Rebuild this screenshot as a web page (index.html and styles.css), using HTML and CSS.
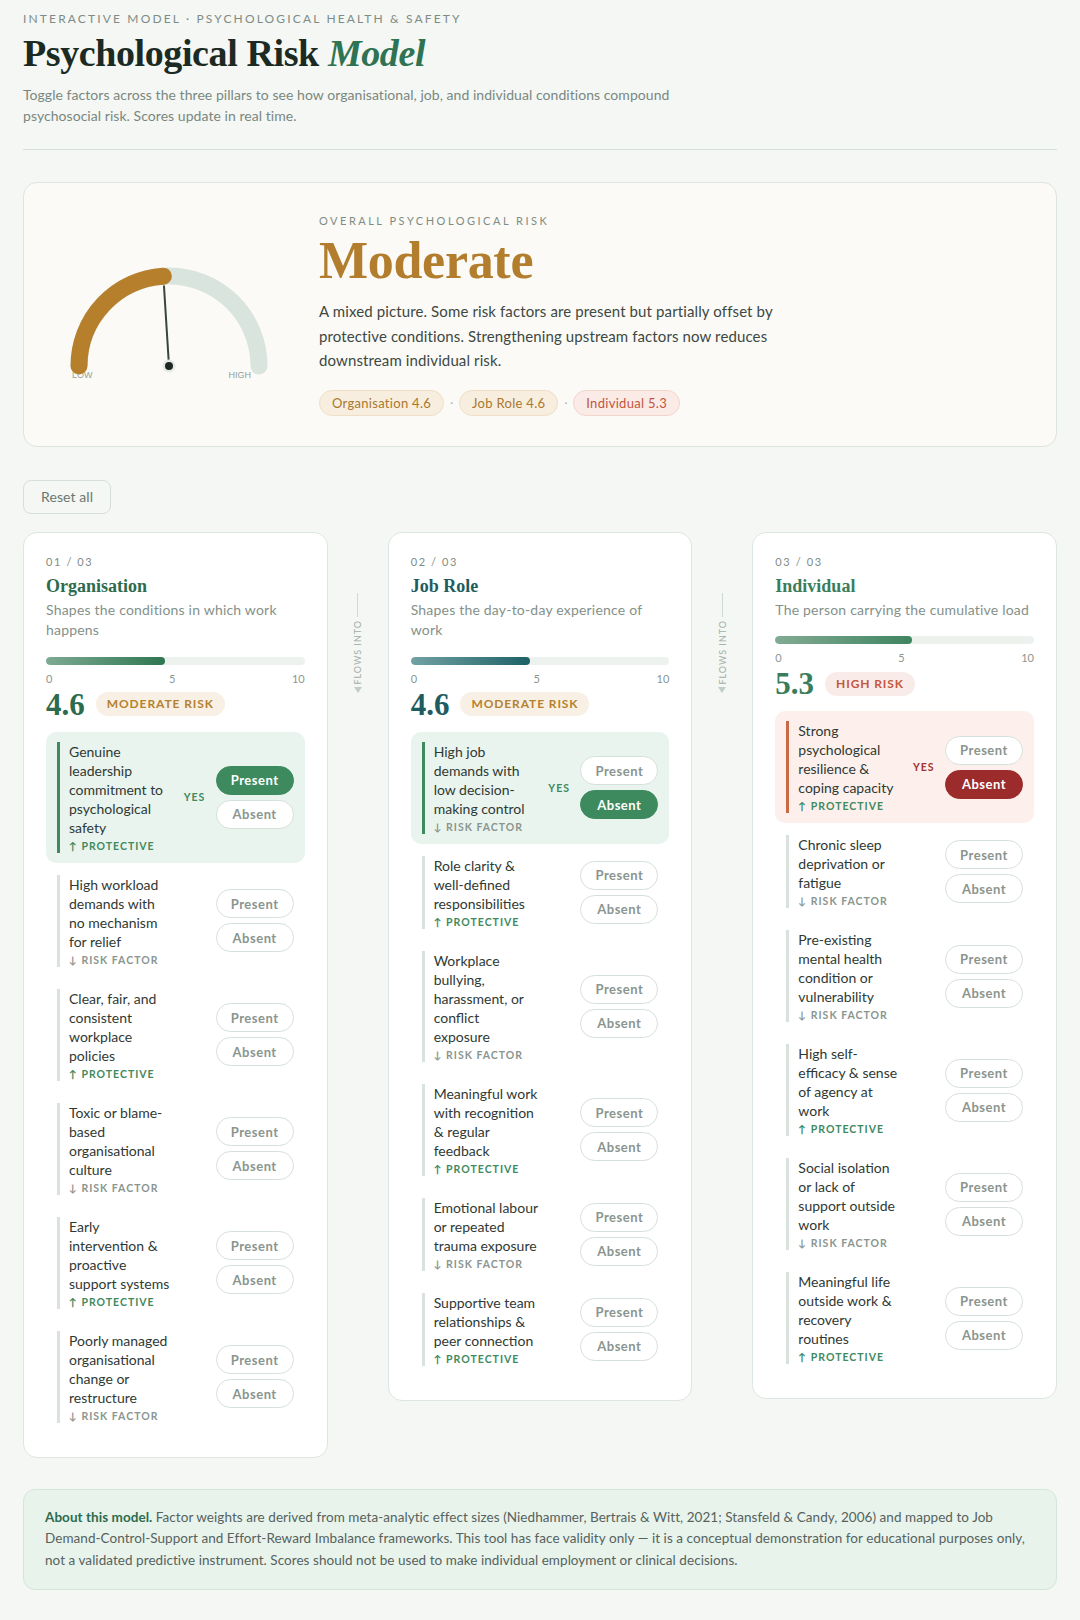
FILE: index.html
```html
<!DOCTYPE html>
<html lang="en">
<head>
<meta charset="utf-8">
<title>Psychological Risk Model</title>
<link rel="stylesheet" href="styles.css">
</head>
<body>
<main class="page">
  <header class="head">
    <div class="eyebrow">Interactive Model · Psychological Health &amp; Safety</div>
    <h1 class="title">Psychological Risk <em>Model</em></h1>
    <p class="lede">Toggle factors across the three pillars to see how organisational, job, and individual conditions compound psychosocial risk. Scores update in real time.</p>
  </header>
  <hr class="rule">

  <section class="hero">
    <svg class="gauge" width="226" height="134" viewBox="0 0 226 134" aria-hidden="true">
      <text class="g-lbl" x="16" y="131">LOW</text>
      <text class="g-lbl" x="195" y="131" text-anchor="end">HIGH</text>
      <path d="M23 119 A90 90 0 0 1 203 119" fill="none" stroke="#d8e4dd" stroke-width="17" stroke-linecap="round"/>
      <path d="M23 119 A90 90 0 0 1 107.35 29.18" fill="none" stroke="#b57f2c" stroke-width="17" stroke-linecap="round"/>
      <line x1="113" y1="119" x2="107.98" y2="39.16" stroke="#3b4540" stroke-width="2" stroke-linecap="round"/>
      <circle cx="113" cy="119" r="6.5" fill="#e4eae6"/>
      <circle cx="113" cy="119" r="4" fill="#1f2823"/>
    </svg>
    <div class="hero-body">
      <div class="hero-eyebrow">Overall Psychological Risk</div>
      <div class="verdict">Moderate</div>
      <p class="hero-text">A mixed picture. Some risk factors are present but partially offset by protective conditions. Strengthening upstream factors now reduces downstream individual risk.</p>
      <div class="pills">
        <span class="pill pill-gold">Organisation 4.6</span>
        <span class="sep">·</span>
        <span class="pill pill-gold">Job Role 4.6</span>
        <span class="sep">·</span>
        <span class="pill pill-red">Individual 5.3</span>
      </div>
    </div>
  </section>

  <button class="reset" type="button">Reset all</button>

  <section class="pillars">
    <article class="pillar">
      <div class="pillar-num">01 / 03</div>
      <h2 class="pillar-title c-org">Organisation</h2>
      <p class="pillar-desc">Shapes the conditions in which work happens</p>
      <div class="bar"><div class="bar-fill fill-org" style="width:46%"></div></div>
      <div class="scale"><span>0</span><span>5</span><span>10</span></div>
      <div class="score-row"><span class="score c-org">4.6</span><span class="badge badge-mod">Moderate risk</span></div>
      <ul class="factors">
        <li class="factor hl-green"><div class="factor-inner">
          <div><div class="factor-name">Genuine leadership commitment to psychological safety</div><div class="tag tag-pro">↑ Protective</div></div>
          <span class="state">YES</span>
          <div class="toggles"><button class="tbtn on-green" type="button">Present</button><button class="tbtn" type="button">Absent</button></div>
        </div></li>
        <li class="factor"><div class="factor-inner">
          <div><div class="factor-name">High workload demands with<br>no mechanism for relief</div><div class="tag tag-risk">↓ Risk factor</div></div>
          <span class="state"></span>
          <div class="toggles"><button class="tbtn" type="button">Present</button><button class="tbtn" type="button">Absent</button></div>
        </div></li>
        <li class="factor"><div class="factor-inner">
          <div><div class="factor-name">Clear, fair, and consistent workplace policies</div><div class="tag tag-pro">↑ Protective</div></div>
          <span class="state"></span>
          <div class="toggles"><button class="tbtn" type="button">Present</button><button class="tbtn" type="button">Absent</button></div>
        </div></li>
        <li class="factor"><div class="factor-inner">
          <div><div class="factor-name">Toxic or blame-based organisational culture</div><div class="tag tag-risk">↓ Risk factor</div></div>
          <span class="state"></span>
          <div class="toggles"><button class="tbtn" type="button">Present</button><button class="tbtn" type="button">Absent</button></div>
        </div></li>
        <li class="factor"><div class="factor-inner">
          <div><div class="factor-name">Early intervention &amp; proactive support systems</div><div class="tag tag-pro">↑ Protective</div></div>
          <span class="state"></span>
          <div class="toggles"><button class="tbtn" type="button">Present</button><button class="tbtn" type="button">Absent</button></div>
        </div></li>
        <li class="factor"><div class="factor-inner">
          <div><div class="factor-name">Poorly managed organisational change or restructure</div><div class="tag tag-risk">↓ Risk factor</div></div>
          <span class="state"></span>
          <div class="toggles"><button class="tbtn" type="button">Present</button><button class="tbtn" type="button">Absent</button></div>
        </div></li>
      </ul>
    </article>

    <div class="flow" aria-hidden="true"><span class="flow-line"></span><span class="flow-text">Flows into</span><span class="flow-arrow"></span></div>

    <article class="pillar">
      <div class="pillar-num">02 / 03</div>
      <h2 class="pillar-title c-job">Job Role</h2>
      <p class="pillar-desc">Shapes the day-to-day experience of work</p>
      <div class="bar"><div class="bar-fill fill-job" style="width:46%"></div></div>
      <div class="scale"><span>0</span><span>5</span><span>10</span></div>
      <div class="score-row"><span class="score c-job">4.6</span><span class="badge badge-mod">Moderate risk</span></div>
      <ul class="factors">
        <li class="factor hl-green"><div class="factor-inner">
          <div><div class="factor-name">High job demands with low decision-making control</div><div class="tag tag-risk">↓ Risk factor</div></div>
          <span class="state">YES</span>
          <div class="toggles"><button class="tbtn" type="button">Present</button><button class="tbtn on-green" type="button">Absent</button></div>
        </div></li>
        <li class="factor"><div class="factor-inner">
          <div><div class="factor-name">Role clarity &amp; well-defined responsibilities</div><div class="tag tag-pro">↑ Protective</div></div>
          <span class="state"></span>
          <div class="toggles"><button class="tbtn" type="button">Present</button><button class="tbtn" type="button">Absent</button></div>
        </div></li>
        <li class="factor"><div class="factor-inner">
          <div><div class="factor-name">Workplace bullying, harassment, or conflict<br>exposure</div><div class="tag tag-risk">↓ Risk factor</div></div>
          <span class="state"></span>
          <div class="toggles"><button class="tbtn" type="button">Present</button><button class="tbtn" type="button">Absent</button></div>
        </div></li>
        <li class="factor"><div class="factor-inner">
          <div><div class="factor-name">Meaningful work with recognition &amp; regular feedback</div><div class="tag tag-pro">↑ Protective</div></div>
          <span class="state"></span>
          <div class="toggles"><button class="tbtn" type="button">Present</button><button class="tbtn" type="button">Absent</button></div>
        </div></li>
        <li class="factor"><div class="factor-inner">
          <div><div class="factor-name">Emotional labour or repeated trauma exposure</div><div class="tag tag-risk">↓ Risk factor</div></div>
          <span class="state"></span>
          <div class="toggles"><button class="tbtn" type="button">Present</button><button class="tbtn" type="button">Absent</button></div>
        </div></li>
        <li class="factor"><div class="factor-inner">
          <div><div class="factor-name">Supportive team relationships &amp; peer connection</div><div class="tag tag-pro">↑ Protective</div></div>
          <span class="state"></span>
          <div class="toggles"><button class="tbtn" type="button">Present</button><button class="tbtn" type="button">Absent</button></div>
        </div></li>
      </ul>
    </article>

    <div class="flow" aria-hidden="true"><span class="flow-line"></span><span class="flow-text">Flows into</span><span class="flow-arrow"></span></div>

    <article class="pillar">
      <div class="pillar-num">03 / 03</div>
      <h2 class="pillar-title c-ind">Individual</h2>
      <p class="pillar-desc">The person carrying the cumulative load</p>
      <div class="bar"><div class="bar-fill fill-ind" style="width:53%"></div></div>
      <div class="scale"><span>0</span><span>5</span><span>10</span></div>
      <div class="score-row"><span class="score c-ind">5.3</span><span class="badge badge-high">High risk</span></div>
      <ul class="factors">
        <li class="factor hl-red"><div class="factor-inner">
          <div><div class="factor-name">Strong psychological resilience &amp; coping capacity</div><div class="tag tag-pro">↑ Protective</div></div>
          <span class="state state-red">YES</span>
          <div class="toggles"><button class="tbtn" type="button">Present</button><button class="tbtn on-red" type="button">Absent</button></div>
        </div></li>
        <li class="factor"><div class="factor-inner">
          <div><div class="factor-name">Chronic sleep deprivation or fatigue</div><div class="tag tag-risk">↓ Risk factor</div></div>
          <span class="state"></span>
          <div class="toggles"><button class="tbtn" type="button">Present</button><button class="tbtn" type="button">Absent</button></div>
        </div></li>
        <li class="factor"><div class="factor-inner">
          <div><div class="factor-name">Pre-existing mental health condition or vulnerability</div><div class="tag tag-risk">↓ Risk factor</div></div>
          <span class="state"></span>
          <div class="toggles"><button class="tbtn" type="button">Present</button><button class="tbtn" type="button">Absent</button></div>
        </div></li>
        <li class="factor"><div class="factor-inner">
          <div><div class="factor-name">High self-<br>efficacy &amp; sense of agency at work</div><div class="tag tag-pro">↑ Protective</div></div>
          <span class="state"></span>
          <div class="toggles"><button class="tbtn" type="button">Present</button><button class="tbtn" type="button">Absent</button></div>
        </div></li>
        <li class="factor"><div class="factor-inner">
          <div><div class="factor-name">Social isolation or lack of support outside work</div><div class="tag tag-risk">↓ Risk factor</div></div>
          <span class="state"></span>
          <div class="toggles"><button class="tbtn" type="button">Present</button><button class="tbtn" type="button">Absent</button></div>
        </div></li>
        <li class="factor"><div class="factor-inner">
          <div><div class="factor-name">Meaningful life outside work &amp; recovery routines</div><div class="tag tag-pro">↑ Protective</div></div>
          <span class="state"></span>
          <div class="toggles"><button class="tbtn" type="button">Present</button><button class="tbtn" type="button">Absent</button></div>
        </div></li>
      </ul>
    </article>
  </section>

  <aside class="about">
    <p class="about-text"><b>About this model.</b> <span>Factor weights are derived from meta-analytic effect sizes (Niedhammer, Bertrais &amp; Witt, 2021; Stansfeld &amp; Candy, 2006) and mapped to Job Demand-Control-Support and Effort-Reward Imbalance frameworks. This tool has face validity only — it is a conceptual demonstration for educational purposes only, not a validated predictive instrument. Scores should not be used to make individual employment or clinical decisions.</span></p>
  </aside>
</main>
</body>
</html>
```

FILE: styles.css
```css
* { box-sizing: border-box; }

body {
  margin: 0;
  background: #f4f7f4;
  font-family: Lato, "Liberation Sans", "DejaVu Sans", sans-serif;
  color: #2c3631;
}

.page {
  padding: 11px 23px 30px;
}

.eyebrow {
  font-size: 12px;
  line-height: 16px;
  letter-spacing: 2.15px;
  text-transform: uppercase;
  color: #7f8c85;
}

.title {
  margin: 5px 0 0;
  font-family: "Liberation Serif", "DejaVu Serif", serif;
  font-weight: 700;
  font-size: 38px;
  line-height: 43px;
  letter-spacing: -0.4px;
  color: #1b2a23;
}

.title em {
  font-style: italic;
  color: #2e7352;
}

.lede {
  margin: 9px 0 0;
  max-width: 680px;
  font-size: 14px;
  line-height: 21px;
  letter-spacing: 0.05px;
  color: #7a8780;
}

.rule {
  border: 0;
  border-top: 1px solid #d8e0db;
  margin: 23px 0 32px;
}

/* Hero */
.hero {
  display: grid;
  grid-template-columns: 226px 1fr;
  column-gap: 37px;
  align-items: center;
  padding: 30px 32px;
  background: #fbfaf6;
  border: 1px solid #dce5df;
  border-radius: 14px;
}

.gauge { display: block; }

.g-lbl {
  font-family: "Liberation Sans", sans-serif;
  font-size: 9px;
  fill: #959f99;
}

.hero-eyebrow {
  font-size: 11px;
  line-height: 16px;
  letter-spacing: 2.5px;
  text-transform: uppercase;
  color: #7f8c85;
}

.verdict {
  margin-top: 3px;
  font-family: "Liberation Serif", "DejaVu Serif", serif;
  font-weight: 700;
  font-size: 52px;
  line-height: 57px;
  letter-spacing: -0.3px;
  color: #b27e2d;
}

.hero-text {
  margin: 10px 0 0;
  max-width: 480px;
  font-size: 15px;
  line-height: 24.5px;
  letter-spacing: 0.12px;
  color: #3d4843;
}

.pills {
  margin-top: 17px;
  display: flex;
  align-items: center;
  gap: 6px;
}

.pill {
  height: 26px;
  padding: 0 12px;
  border: 1px solid;
  border-radius: 13px;
  font-size: 13px;
  line-height: 24px;
  letter-spacing: 0.3px;
}

.pill-gold { background: #f8eedf; border-color: #efdfc6; color: #a9772d; }
.pill-red { background: #fbebe7; border-color: #f2d5cd; color: #c2553c; }

.sep { color: #a6b0aa; font-size: 11px; }

/* Reset */
.reset {
  display: block;
  margin-top: 33px;
  height: 34px;
  padding: 0 17px;
  background: transparent;
  border: 1px solid #d6dfd9;
  border-radius: 8px;
  font-family: Lato, "Liberation Sans", sans-serif;
  font-size: 14px;
  letter-spacing: 0.1px;
  color: #6b7871;
}

/* Pillars */
.pillars {
  margin-top: 18px;
  display: grid;
  grid-template-columns: 1fr 60px 1fr 60px 1fr;
  align-items: start;
}

.pillar {
  background: #ffffff;
  border: 1px solid #dde6e0;
  border-radius: 14px;
  padding: 22px 22px 24px;
}

.pillar-num {
  font-size: 11px;
  line-height: 14px;
  letter-spacing: 1.6px;
  color: #7f8c85;
}

.pillar-title {
  margin: 6px 0 0;
  font-family: "Liberation Serif", "DejaVu Serif", serif;
  font-weight: 700;
  font-size: 18px;
  line-height: 22px;
}

.c-org { color: #2d6b4e; }
.c-job { color: #1f5c60; }
.c-ind { color: #3b7d5b; }

.pillar-desc {
  margin: 3px 0 0;
  font-size: 14px;
  line-height: 20.5px;
  letter-spacing: 0.2px;
  color: #84918a;
}

.bar {
  margin-top: 16px;
  height: 8px;
  border-radius: 4px;
  background: #eef2ef;
  overflow: hidden;
}

.bar-fill { height: 100%; border-radius: 4px; }
.fill-org { background: linear-gradient(90deg, #7daa93, #2f7652); }
.fill-job { background: linear-gradient(90deg, #73a1a4, #1d6266); }
.fill-ind { background: linear-gradient(90deg, #82ab94, #3f8560); }

.scale {
  margin-top: 7px;
  display: flex;
  justify-content: space-between;
  font-size: 11px;
  line-height: 14px;
  color: #8b968f;
}

.score-row {
  display: flex;
  align-items: center;
  gap: 11px;
  margin: 3px 0 12px;
}

.score {
  font-family: "Liberation Serif", "DejaVu Serif", serif;
  font-weight: 700;
  font-size: 31px;
  line-height: 31px;
}

.badge {
  height: 24px;
  padding: 0 11px;
  border-radius: 12px;
  font-size: 12px;
  font-weight: 700;
  line-height: 24px;
  letter-spacing: 0.9px;
  text-transform: uppercase;
}

.badge-mod { background: #f8f0e4; color: #b5812f; }
.badge-high { background: #f9ece8; color: #c4573d; }

.factors {
  list-style: none;
  margin: 0;
  padding: 0;
  display: flex;
  flex-direction: column;
  gap: 2px;
}

.factor {
  padding: 10px 11px;
  border-radius: 10px;
}

.factor-inner {
  display: grid;
  grid-template-columns: 1fr 24px 78px;
  column-gap: 8px;
  align-items: center;
  padding-left: 9px;
  border-left: 3px solid #d9e2dc;
}

.factor-name {
  font-size: 14px;
  line-height: 19px;
  color: #2f3934;
}

.tag {
  margin-top: 2px;
  font-size: 10.5px;
  line-height: 14px;
  font-weight: 700;
  letter-spacing: 1px;
  text-transform: uppercase;
}

.tag-pro { color: #3f8a5e; }
.tag-risk { color: #8a958f; }

.state {
  font-size: 10.5px;
  font-weight: 700;
  letter-spacing: 1px;
  color: #3f8a5e;
}

.state-red { color: #a33232; }

.toggles {
  display: flex;
  flex-direction: column;
  gap: 5px;
}

.tbtn {
  width: 78px;
  height: 29px;
  padding: 0;
  background: #ffffff;
  border: 1px solid #d6e0da;
  border-radius: 15px;
  font-family: Lato, "Liberation Sans", sans-serif;
  font-size: 13px;
  font-weight: 700;
  letter-spacing: 0.5px;
  color: #8a958f;
}

.tbtn.on-green { background: #3d8a5e; border-color: #3d8a5e; color: #ffffff; }
.tbtn.on-red { background: #9c2b2b; border-color: #9c2b2b; color: #ffffff; }

.factor.hl-green { background: #eaf4ee; }
.factor.hl-green .factor-inner { border-left-color: #3d8a5e; }
.factor.hl-red { background: #fdf0ec; }
.factor.hl-red .factor-inner { border-left-color: #c96a45; }

/* Flow connector */
.flow {
  display: flex;
  flex-direction: column;
  align-items: center;
  padding-top: 61px;
}

.flow-line {
  width: 1px;
  height: 24px;
  background: #d0dad4;
}

.flow-text {
  margin-top: 3px;
  writing-mode: vertical-rl;
  transform: rotate(180deg);
  font-size: 9px;
  letter-spacing: 1px;
  text-transform: uppercase;
  color: #a3aea8;
}

.flow-arrow {
  margin-top: 3px;
  width: 0;
  height: 0;
  border-left: 4px solid transparent;
  border-right: 4px solid transparent;
  border-top: 6px solid #c3cdc7;
}

/* About */
.about {
  margin-top: 31px;
  padding: 17px 21px 18px;
  background: #e8f3ec;
  border: 1px solid #d4e6da;
  border-radius: 12px;
}

.about-text {
  margin: 0;
  font-size: 13.5px;
  line-height: 21.5px;
  letter-spacing: 0.05px;
  color: #56625c;
}

.about-text b { color: #2e6b4e; font-weight: 700; }
```
